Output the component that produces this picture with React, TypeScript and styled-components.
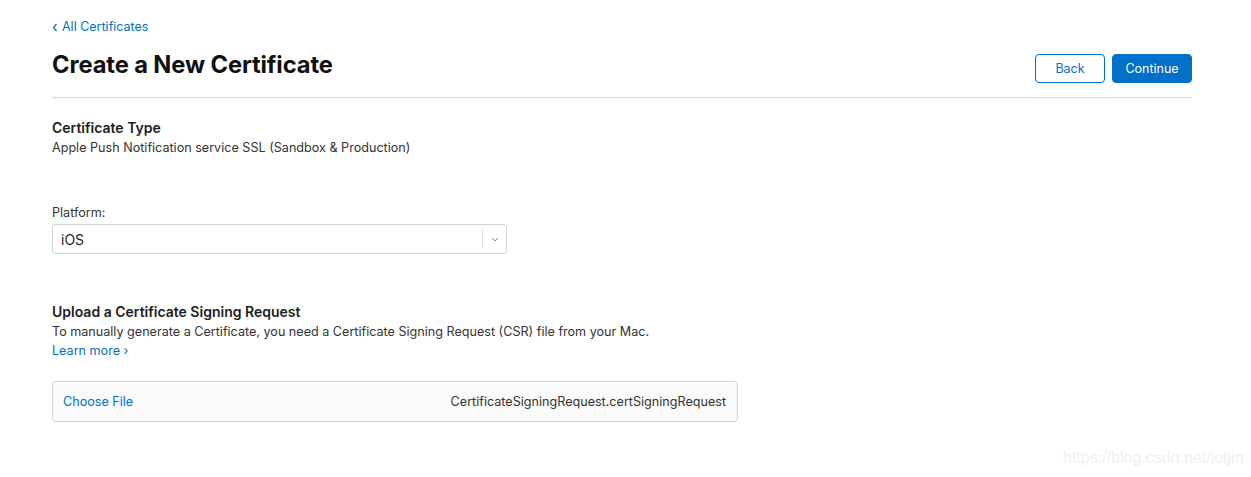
import React from "react";
import styled, { createGlobalStyle } from "styled-components";

const Global = createGlobalStyle`
  html, body { margin: 0; padding: 0; background: #fff; }
  body { font-family: Inter, "Noto Sans", "Liberation Sans", sans-serif; color: #1d1d1f; }
  * { box-sizing: border-box; }
`;

const Page = styled.div`
  position: relative;
  width: 1251px;
  height: 477px;
  overflow: hidden;
`;

const Main = styled.main`
  width: 1140px;
  margin-left: 52px;
  padding-top: 19px;
  display: flex;
  flex-direction: column;
`;

const BackLink = styled.a`
  font-size: 12.5px;
  line-height: 16px;
  color: #0070c9;
  text-decoration: none;
  display: flex;
  align-items: center;
  gap: 4px;
`;

const Header = styled.header`
  margin-top: 15px;
  display: flex;
  justify-content: space-between;
  align-items: flex-start;
  padding-bottom: 14px;
  border-bottom: 1px solid #d6d6d6;
`;

const Title = styled.h1`
  margin: 0;
  font-size: 23.7px;
  line-height: 30px;
  font-weight: 700;
  letter-spacing: -0.1px;
  color: #111;
`;

const Buttons = styled.div`
  display: flex;
  gap: 7px;
  margin-top: 4px;
`;

const Button = styled.button<{ $primary?: boolean }>`
  height: 29px;
  min-width: ${(p) => (p.$primary ? "80px" : "70px")};
  border-radius: 4px;
  font-family: inherit;
  font-size: 12.5px;
  border: 1px solid #0070c9;
  background: ${(p) => (p.$primary ? "#0070c9" : "#fff")};
  color: ${(p) => (p.$primary ? "#fff" : "#0070c9")};
  padding: 0 12px;
`;

const Section = styled.section<{ $top: number }>`
  margin-top: ${(p) => p.$top}px;
  display: flex;
  flex-direction: column;
`;

const Heading = styled.h2`
  margin: 0;
  font-size: 14px;
  line-height: 20px;
  font-weight: 600;
  color: #1d1d1f;
`;

const Text = styled.p`
  margin: 0;
  font-size: 12.6px;
  line-height: 19px;
  color: #333;
`;

const Link = styled.a`
  font-size: 12.6px;
  line-height: 19px;
  color: #0070c9;
  text-decoration: none;
`;

const Label = styled.label`
  font-size: 12.6px;
  line-height: 18px;
  color: #333;
`;

const Select = styled.div`
  margin-top: 2px;
  width: 455px;
  height: 30px;
  border: 1px solid #d2d2d7;
  border-radius: 3px;
  display: flex;
  align-items: center;
  padding-left: 8px;
  font-size: 14px;
  color: #1d1d1f;
`;

const SelectValue = styled.span`
  flex: 1;
`;

const SelectArrow = styled.span`
  width: 24px;
  height: 20px;
  border-left: 1px solid #e1e1e1;
  display: flex;
  align-items: center;
  justify-content: center;
  color: #888;
`;

const FileBox = styled.div`
  margin-top: 21px;
  width: 686px;
  height: 41px;
  border: 1px solid #d2d2d7;
  border-radius: 4px;
  background: #fafafa;
  display: flex;
  align-items: center;
  justify-content: space-between;
  padding: 0 11px 0 10px;
  font-size: 12.6px;
`;

const ChooseFile = styled.span`
  color: #0070c9;
`;

const FileName = styled.span`
  color: #333;
`;

const Watermark = styled.div`
  position: absolute;
  left: 1063px;
  top: 448px;
  font-family: "Liberation Sans", Arial, sans-serif;
  font-size: 16px;
  line-height: 20px;
  color: #efefef;
`;

export default function App() {
  return (
    <Page>
      <Global />
      <Main>
        <BackLink href="#">
          <svg width="6" height="9" viewBox="0 0 6 9">
            <path d="M4.5 1L1.5 4.5L4.5 8" fill="none" stroke="#0070c9" strokeWidth="1.2" />
          </svg>
          All Certificates
        </BackLink>
        <Header>
          <Title>Create a New Certificate</Title>
          <Buttons>
            <Button>Back</Button>
            <Button $primary>Continue</Button>
          </Buttons>
        </Header>
        <Section $top={20}>
          <Heading>Certificate Type</Heading>
          <Text>Apple Push Notification service SSL (Sandbox &amp; Production)</Text>
        </Section>
        <Section $top={47}>
          <Label>Platform:</Label>
          <Select>
            <SelectValue>iOS</SelectValue>
            <SelectArrow>
              <svg width="8" height="5" viewBox="0 0 8 5">
                <path d="M1 1L4 4L7 1" fill="none" stroke="#888" strokeWidth="1" />
              </svg>
            </SelectArrow>
          </Select>
        </Section>
        <Section $top={48}>
          <Heading>Upload a Certificate Signing Request</Heading>
          <Text>To manually generate a Certificate, you need a Certificate Signing Request (CSR) file from your Mac.</Text>
          <Link href="#">Learn more ›</Link>
          <FileBox>
            <ChooseFile>Choose File</ChooseFile>
            <FileName>CertificateSigningRequest.certSigningRequest</FileName>
          </FileBox>
        </Section>
      </Main>
      <Watermark>https://blog.csdn.net/iotjin</Watermark>
    </Page>
  );
}
